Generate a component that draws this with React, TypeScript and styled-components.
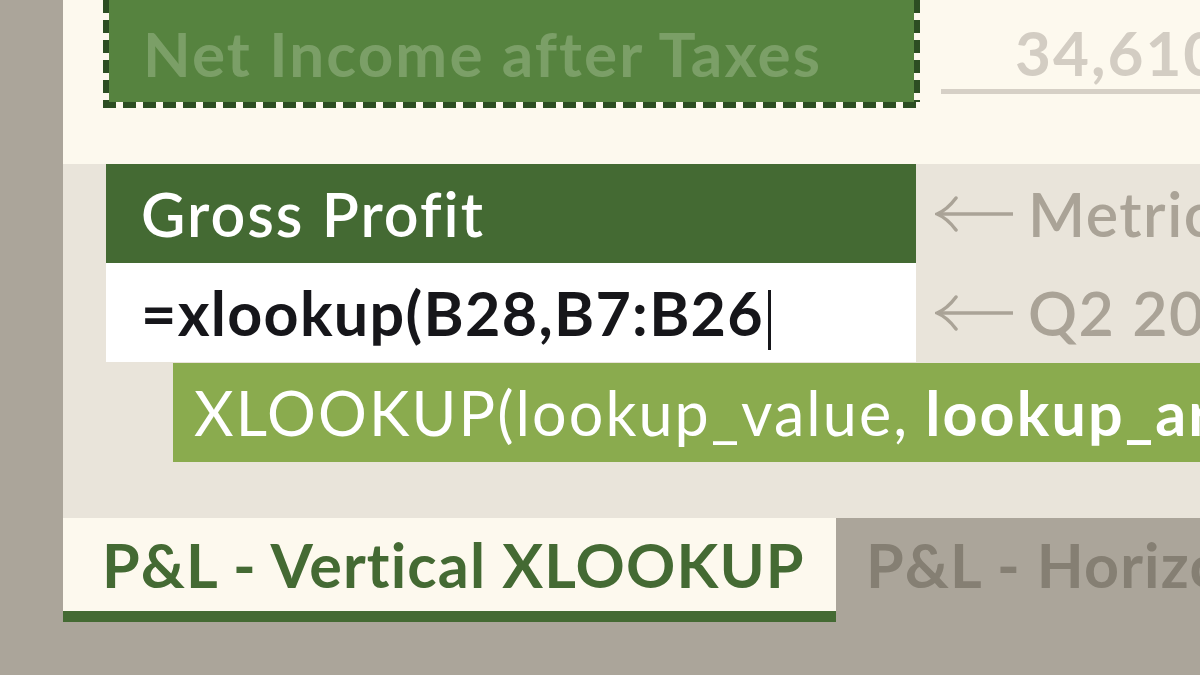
import React from "react";
import styled, { createGlobalStyle } from "styled-components";

const GlobalStyle = createGlobalStyle`
  html, body {
    margin: 0;
    padding: 0;
    width: 1200px;
    height: 675px;
    overflow: hidden;
    background: #aba59a;
  }
  * { box-sizing: border-box; }
`;

const FONT = `Lato, "Open Sans", "Liberation Sans", sans-serif`;

const Page = styled.div`
  display: flex;
  width: 1200px;
  height: 675px;
  background: #aba59a;
  font-family: ${FONT};
  overflow: hidden;
`;

const Rail = styled.div`
  width: 63px;
  flex: none;
  background: #aba59a;
`;

const Sheet = styled.div`
  flex: 1;
  display: flex;
  flex-direction: column;
  min-width: 0;
`;

/* ---------- faded row above (copied range) ---------- */
const TopBand = styled.div`
  height: 164px;
  flex: none;
  background: #fdf9ee;
  display: flex;
  align-items: flex-start;
  padding-left: 40px;
  overflow: hidden;
`;

const dash = (dir: string) =>
  `repeating-linear-gradient(${dir}, #2c4d22 0 13px, #fdf9ee 13px 20px)`;

const CopiedCell = styled.div`
  width: 817px;
  height: 128px;
  margin-top: -20px;
  flex: none;
  display: flex;
  align-items: flex-end;
  padding: 0 0 24px 40px;
  background-color: #56833f;
  background-image: ${dash("to right")}, ${dash("to bottom")},
    ${dash("to bottom")};
  background-size: 100% 6px, 6px 100%, 6px 100%;
  background-position: left bottom, left top, right top;
  background-repeat: no-repeat;
  font-size: 62px;
  font-weight: 700;
  letter-spacing: 2.1px;
  color: #7b9f67;
  line-height: 1;
  white-space: nowrap;
`;

const TotalCell = styled.div`
  flex: 1;
  margin-left: 21px;
  height: 94px;
  border-bottom: 5px solid #d6d0c6;
  display: flex;
  align-items: flex-end;
  padding: 0 0 6px 74px;
  font-size: 62px;
  font-weight: 700;
  letter-spacing: 2px;
  color: #d3cdc3;
  line-height: 1;
  white-space: nowrap;
  overflow: hidden;
`;

/* ---------- active editing area ---------- */
const MidBand = styled.div`
  height: 354px;
  flex: none;
  background: #e9e4da;
  display: flex;
  flex-direction: column;
  padding-left: 43px;
  overflow: hidden;
`;

const Row = styled.div`
  display: flex;
  align-items: center;
  height: 99px;
  flex: none;
`;

const Cell = styled.div<{ $tone: "header" | "edit" }>`
  width: 810px;
  height: 100%;
  flex: none;
  display: flex;
  align-items: center;
  padding-left: 35px;
  font-size: 61px;
  font-weight: ${(p) => (p.$tone === "header" ? 600 : 700)};
  letter-spacing: ${(p) => (p.$tone === "header" ? "2px" : "1.3px")};
  background: ${(p) => (p.$tone === "header" ? "#446a33" : "#ffffff")};
  color: ${(p) => (p.$tone === "header" ? "#ffffff" : "#16161a")};
  white-space: nowrap;
  line-height: 1;
`;

const Caret = styled.span`
  display: inline-block;
  width: 3px;
  height: 60px;
  margin-left: 4px;
  background: #16161a;
  transform: translateY(7px);
`;

const Note = styled.div`
  display: flex;
  align-items: center;
  margin-left: 19px;
  gap: 15px;
  font-size: 61px;
  font-weight: 600;
  letter-spacing: 1.5px;
  color: #aaa397;
  white-space: nowrap;
  line-height: 1;
`;

const Tip = styled.div`
  margin-left: 67px;
  margin-top: 1px;
  height: 99px;
  flex: none;
  background: #8aab4e;
  display: flex;
  align-items: center;
  padding-left: 21px;
  font-size: 61px;
  font-weight: 400;
  letter-spacing: 2.1px;
  color: #ffffff;
  white-space: nowrap;
  line-height: 1;
`;

const Strong = styled.b`
  font-weight: 700;
  margin-left: 16px;
`;

/* ---------- sheet tabs ---------- */
const TabBar = styled.div`
  flex: 1;
  display: flex;
  align-items: flex-start;
  background: #aba59a;
`;

const Tab = styled.div<{ $active?: boolean }>`
  height: 104px;
  flex: none;
  display: flex;
  align-items: center;
  width: ${(p) => (p.$active ? "773px" : "auto")};
  padding: ${(p) => (p.$active ? "0 0 0 39px" : "0 0 11px 30px")};
  background: ${(p) => (p.$active ? "#fdf9ee" : "transparent")};
  border-bottom: ${(p) => (p.$active ? "11px solid #446a33" : "none")};
  color: ${(p) => (p.$active ? "#446a33" : "#857f73")};
  font-size: 61px;
  font-weight: 700;
  letter-spacing: 1.15px;
  white-space: nowrap;
  line-height: 1;
`;

const LeftArrow = () => (
  <svg width="78" height="36" viewBox="0 0 78 36" fill="none">
    <path d="M4 18 H78" stroke="#aaa397" strokeWidth="3.5" />
    <path
      d="M21 2 Q12 14 2 18 Q12 22 21 34"
      stroke="#aaa397"
      strokeWidth="3.5"
      strokeLinecap="round"
      fill="none"
    />
  </svg>
);

export default function App() {
  return (
    <>
      <GlobalStyle />
      <Page>
        <Rail />
        <Sheet>
          <TopBand>
            <CopiedCell>Net Income after Taxes</CopiedCell>
            <TotalCell>34,610</TotalCell>
          </TopBand>
          <MidBand>
            <Row>
              <Cell $tone="header">Gross Profit</Cell>
              <Note>
                <LeftArrow />
                Metric
              </Note>
            </Row>
            <Row>
              <Cell $tone="edit">
                =xlookup(B28,B7:B26
                <Caret />
              </Cell>
              <Note>
                <LeftArrow />
                Q2 2024
              </Note>
            </Row>
            <Tip>
              XLOOKUP(lookup_value,
              <Strong>lookup_array, return_array)</Strong>
            </Tip>
          </MidBand>
          <TabBar>
            <Tab $active>P&amp;L - Vertical XLOOKUP</Tab>
            <Tab>P&amp;L - Horizontal XLOOKUP</Tab>
          </TabBar>
        </Sheet>
      </Page>
    </>
  );
}
